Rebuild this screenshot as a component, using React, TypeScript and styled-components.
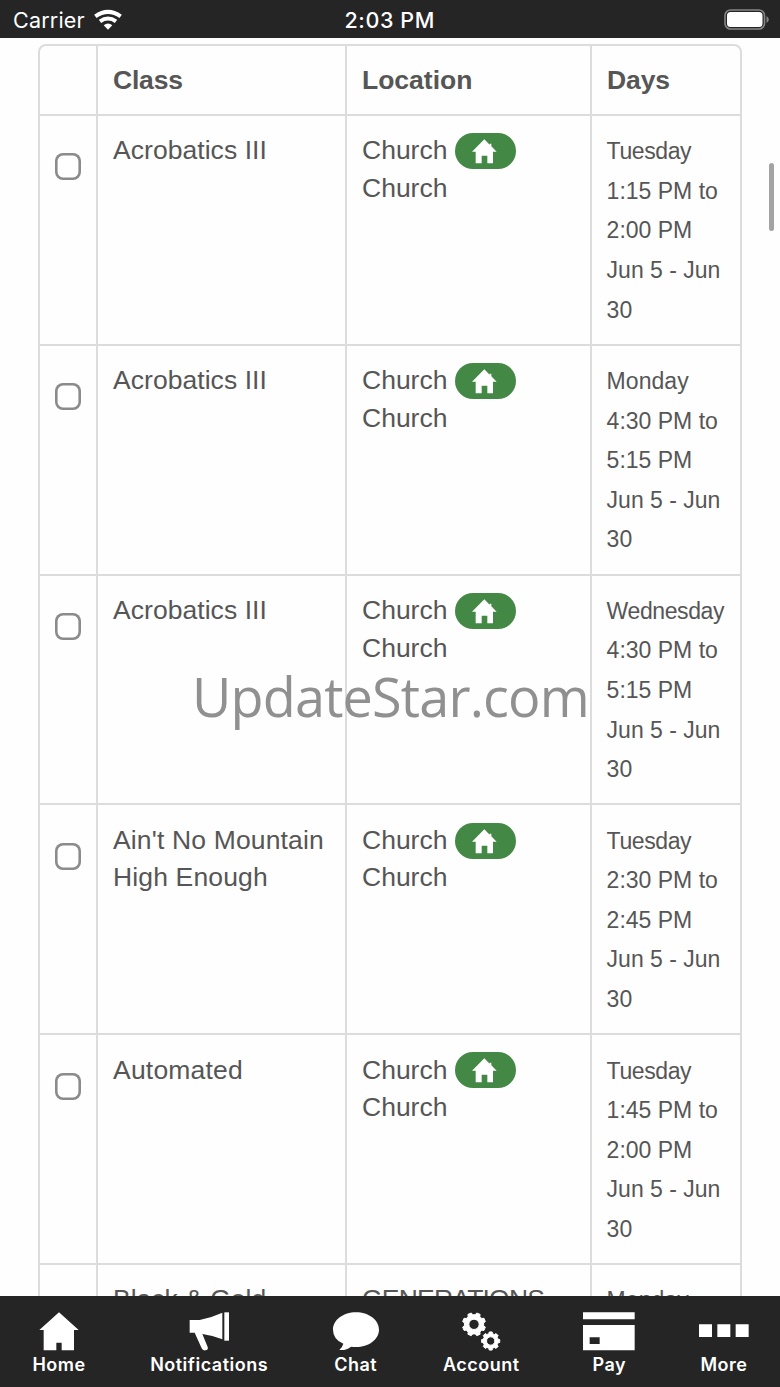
import React from "react";
import styled, { createGlobalStyle } from "styled-components";

const GlobalStyle = createGlobalStyle`
  *, *::before, *::after { box-sizing: border-box; }
  html, body { margin: 0; padding: 0; overflow: hidden; background: #fefefe; }
`;

const Screen = styled.div`
  position: relative;
  display: flex;
  flex-direction: column;
  width: 780px;
  height: 1387px;
  overflow: hidden;
  background: #fefefe;
  color: #565656;
  font-family: "Liberation Sans", Arial, sans-serif;
`;

const StatusBar = styled.header`
  flex: none;
  display: grid;
  grid-template-columns: 1fr auto 1fr;
  align-items: center;
  height: 38px;
  padding: 2px 11.5px 0 13px;
  background: #252525;
  color: #fff;
  font-family: Inter, sans-serif;
  line-height: 36px;
`;

const Carrier = styled.div`
  display: flex;
  align-items: center;
  gap: 9px;
  font-size: 21.5px;
  letter-spacing: 0.2px;
`;

const Clock = styled.div`
  margin-right: 2px;
  font-weight: 500;
  font-size: 21.5px;
  letter-spacing: 0.6px;
`;

const BatterySlot = styled.div`
  display: flex;
  justify-content: flex-end;
`;

const Content = styled.main`
  flex: 1;
  min-height: 0;
  overflow: hidden;
  padding: 6px 0 0 38px;
`;

const Table = styled.div`
  width: 704px;
  border: 2px solid #dcdcdc;
  border-radius: 8px;
`;

const Row = styled.div<{ $header?: boolean }>`
  display: grid;
  grid-template-columns: 56px 249px 245px 150px;
  height: ${(p) => (p.$header ? "68px" : "229.84px")};
  border-top: ${(p) => (p.$header ? "none" : "2px solid #dcdcdc")};
`;

const Cell = styled.div<{ $tracking?: number }>`
  padding: 16.3px 0 0 15px;
  border-left: 2px solid #dcdcdc;
  white-space: pre-line;
  font-size: 26.5px;
  line-height: 37.6px;
  letter-spacing: ${(p) => p.$tracking ?? 0}px;
`;

const HeadCell = styled(Cell)`
  padding-top: 15.5px;
  font-weight: 700;
`;

const DaysCell = styled(Cell)`
  padding-top: 16.2px;
  padding-left: 14.6px;
  font-size: 23px;
  line-height: 39.6px;
`;

const DayName = styled.div<{ $tracking: number }>`
  letter-spacing: ${(p) => p.$tracking}px;
`;

const CheckCell = styled(Cell)`
  padding: 37.2px 0 0 14.6px;
  border-left: none;
`;

const Checkbox = styled.input`
  appearance: none;
  display: block;
  width: 26.6px;
  height: 27px;
  margin: 0;
  border: none;
  border-radius: 8px;
  background: #fff;
  box-shadow: inset 0 0 0 2.6px #8b8b8b;
`;

const PlaceLine = styled.div`
  display: flex;
  align-items: center;
  gap: 8px;
`;

const Badge = styled.span`
  display: flex;
  width: 61px;
  height: 36px;
  padding: 6px 0 0 17px;
  border-radius: 18px;
  background: #438845;
`;

const ScrollThumb = styled.div`
  position: absolute;
  top: 163px;
  right: 6px;
  width: 5.5px;
  height: 68px;
  border-radius: 3px;
  background: #a3a3a3;
`;

const Watermark = styled.div`
  position: absolute;
  top: 659px;
  left: 192px;
  font-family: "Open Sans", sans-serif;
  font-size: 54px;
  line-height: 74px;
  letter-spacing: -0.83px;
  color: #909090;
  white-space: nowrap;
`;

const TabBar = styled.nav`
  flex: none;
  display: flex;
  justify-content: space-between;
  height: 91px;
  padding: 16px 31.5px 0 32.5px;
  background: #252525;
  color: #fff;
`;

const Tab = styled.div<{ $width: number }>`
  display: flex;
  flex-direction: column;
  align-items: center;
  width: ${(p) => p.$width}px;
  font-family: Inter, sans-serif;
  font-weight: 600;
  font-size: 18px;
  line-height: 24px;
  letter-spacing: 0.5px;
  white-space: nowrap;
`;

const TabIcon = styled.svg`
  flex: none;
  display: block;
  height: 39px;
  margin-bottom: 2px;
  fill: currentColor;
`;

const gear = (cx: number, cy: number, outer: number, inner: number, hole: number, turn: number) => {
  const teeth = 8;
  const step = (Math.PI * 2) / teeth;
  const point = (r: number, a: number) =>
    `${(cx + r * Math.cos(a)).toFixed(2)} ${(cy + r * Math.sin(a)).toFixed(2)}`;
  const points: string[] = [];
  for (let i = 0; i < teeth; i++) {
    const a = (i + turn) * step;
    points.push(
      point(inner, a - step * 0.32),
      point(outer, a - step * 0.2),
      point(outer, a + step * 0.2),
      point(inner, a + step * 0.32)
    );
  }
  return `M${points.join("L")}Z M${cx - hole} ${cy}a${hole} ${hole} 0 1 0 ${hole * 2} 0a${hole} ${hole} 0 1 0 ${-hole * 2} 0Z`;
};

const HomeIcon = () => (
  <TabIcon width="40" viewBox="0 0 120 117">
    <path d="M60 1 119 54H105V115H68V92H52V115H14V54H1Z" />
  </TabIcon>
);

const MegaphoneIcon = () => (
  <TabIcon width="40" viewBox="-2 0 120 117">
    <path d="M0 24H30Q65 17 98 2V82Q68 70 38 66L54 105Q57 114 47 115Q39 116 36 109L15 62H0Z" />
    <path d="M104 1H119V86H104Z" />
  </TabIcon>
);

const ChatIcon = () => (
  <TabIcon width="46" viewBox="0 0 138 117">
    <path d="M69 1C107 1 138 24 138 53S107 105 69 105Q61 105 54 104Q40 116 19 114Q28 106 31 95Q0 82 0 53C0 24 31 1 69 1Z" />
  </TabIcon>
);

const GearsIcon = () => (
  <TabIcon width="38.7" viewBox="0 0 116 117">
    <g fillRule="evenodd" stroke="currentColor" strokeWidth="3" strokeLinejoin="round">
      <path d={gear(36, 37, 35, 29, 15.5, 0.5)} />
      <path d={gear(86, 87, 27.5, 22.5, 12.5, 0)} />
    </g>
  </TabIcon>
);

const CardIcon = () => (
  <TabIcon width="52" viewBox="0 0 156 117">
    <path fillRule="evenodd" d="M0 1H155V22H0ZM0 39H155V115H0ZM20 76V96H50V76Z" />
  </TabIcon>
);

const MoreIcon = () => (
  <TabIcon width="50" viewBox="0 0 150 117">
    <path d="M0 37H39V75H0ZM55 37H94V75H55ZM110 37H149V75H110Z" />
  </TabIcon>
);

const tabs = [
  { label: "Home", width: 53, Icon: HomeIcon },
  { label: "Notifications", width: 118, Icon: MegaphoneIcon },
  { label: "Chat", width: 46, Icon: ChatIcon },
  { label: "Account", width: 76, Icon: GearsIcon },
  { label: "Pay", width: 51, Icon: CardIcon },
  { label: "More", width: 49, Icon: MoreIcon },
];

const classes = [
  { name: "Acrobatics III", tracking: 0.05, day: "Tuesday", times: "1:15 PM to\n2:00 PM\nJun 5 - Jun\n30" },
  { name: "Acrobatics III", tracking: 0.05, day: "Monday", times: "4:30 PM to\n5:15 PM\nJun 5 - Jun\n30" },
  { name: "Acrobatics III", tracking: 0.05, day: "Wednesday", times: "4:30 PM to\n5:15 PM\nJun 5 - Jun\n30" },
  { name: "Ain't No Mountain\nHigh Enough", tracking: 0.15, day: "Tuesday", times: "2:30 PM to\n2:45 PM\nJun 5 - Jun\n30" },
  { name: "Automated", tracking: 0.2, day: "Tuesday", times: "1:45 PM to\n2:00 PM\nJun 5 - Jun\n30" },
];

const dayTracking = (day: string) => (day === "Monday" ? 0.05 : -0.4);

const HomeBadge = () => (
  <Badge>
    <svg width="25" height="25" viewBox="0 0 75 75" fill="#fff">
      <path d="M37 1 53 17V14H58V22L74 38H63V73H46V50H29V73H11V38H0Z" />
    </svg>
  </Badge>
);

export default function App() {
  return (
    <Screen>
      <GlobalStyle />
      <StatusBar>
        <Carrier>
          Carrier
          <svg width="29" height="22" viewBox="0 0 87 66" fill="none" stroke="#fff" strokeWidth="12">
            <path d="M4 22Q42 -5 80 22" />
            <path d="M18 37Q42 20 66 37" />
            <path d="M42 62 29 49Q42 38 55 49Z" fill="#fff" stroke="none" />
          </svg>
        </Carrier>
        <Clock>2:03 PM</Clock>
        <BatterySlot>
          <svg width="45" height="22" viewBox="0 0 45 22">
            <rect x="1" y="1" width="39.5" height="19" rx="5.5" fill="none" stroke="#858585" strokeWidth="1.6" />
            <rect x="3" y="3" width="35.5" height="15" rx="3.5" fill="#fff" />
            <path d="M42.5 7Q44.8 8.5 44.8 10.5T42.5 14Z" fill="#858585" />
          </svg>
        </BatterySlot>
      </StatusBar>
      <Content>
        <Table>
          <Row $header>
            <CheckCell />
            <HeadCell $tracking={-0.2}>Class</HeadCell>
            <HeadCell $tracking={0}>Location</HeadCell>
            <HeadCell $tracking={-0.1}>Days</HeadCell>
          </Row>
          {classes.map((item, i) => (
            <Row key={i}>
              <CheckCell>
                <Checkbox type="checkbox" />
              </CheckCell>
              <Cell $tracking={item.tracking}>{item.name}</Cell>
              <Cell>
                <PlaceLine>
                  Church
                  <HomeBadge />
                </PlaceLine>
                Church
              </Cell>
              <DaysCell>
                <DayName $tracking={dayTracking(item.day)}>{item.day}</DayName>
                {item.times}
              </DaysCell>
            </Row>
          ))}
          <Row>
            <CheckCell />
            <Cell>Black &amp; Gold</Cell>
            <Cell $tracking={-0.8}>GENERATIONS</Cell>
            <DaysCell>
              <DayName $tracking={dayTracking("Monday")}>Monday</DayName>
            </DaysCell>
          </Row>
        </Table>
      </Content>
      <TabBar>
        {tabs.map(({ label, width, Icon }) => (
          <Tab key={label} $width={width}>
            <Icon />
            {label}
          </Tab>
        ))}
      </TabBar>
      <ScrollThumb />
      <Watermark>UpdateStar.com</Watermark>
    </Screen>
  );
}
